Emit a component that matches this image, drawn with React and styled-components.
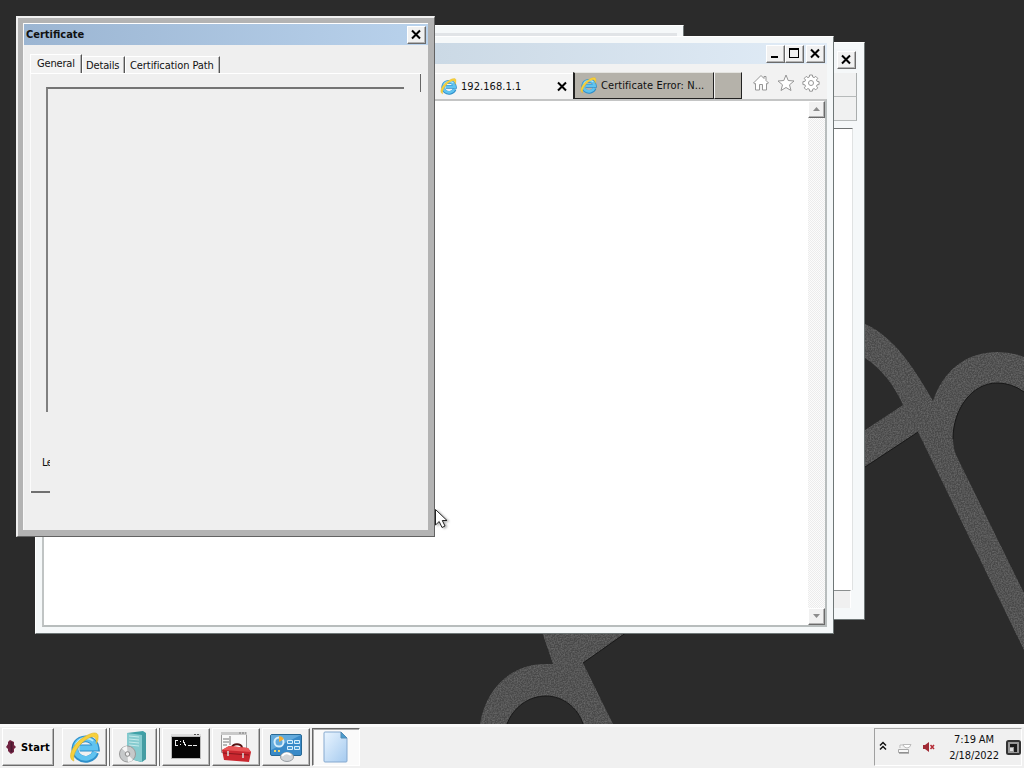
import React from "react";
import styled, { createGlobalStyle, css } from "styled-components";

const GlobalStyle = createGlobalStyle`
  * {
    box-sizing: border-box;
  }
  body {
    margin: 0;
    overflow: hidden;
    font-family: "DejaVu Sans Condensed", "DejaVu Sans", sans-serif;
    font-stretch: condensed;
    font-size: 11px;
    line-height: 14px;
    color: #111;
  }
`;

const raised = css`
  border: 1px solid;
  border-color: #fff #6b6b6b #6b6b6b #fff;
  box-shadow: inset -1px -1px 0 #b4b4b4;
`;

const StyledScreen = styled.div`
  width: 1024px;
  height: 768px;
  display: flex;
  flex-direction: column;
  overflow: hidden;
  position: relative;
`;

const StyledDesktop = styled.main`
  height: 724px;
  position: relative;
  overflow: hidden;
  background: #2b2b2b;
`;

const StyledWallpaper = styled.svg`
  display: block;
`;

const StyledWindow = styled.section`
  position: absolute;
  left: ${props => props.$x}px;
  top: ${props => props.$y}px;
  width: ${props => props.$w}px;
  height: ${props => props.$h}px;
  display: flex;
  flex-direction: column;
  padding: 6px;
  background: #f5f8f9;
  border: 1px solid;
  border-color: #fff #6f7777 #6f7777 #fff;
`;

const StyledDialog = styled(StyledWindow)`
  padding: 5px 6px 6px 5px;
  background: #b3b3b3;
  border-width: 2px 1px 1px 2px;
  border-color: #f0f0f0 #626262 #626262 #f0f0f0;
`;

const StyledDialogInner = styled.div`
  flex: 1;
  display: flex;
  flex-direction: column;
  background: #efefef;
  border-top: 1px solid #fff;
  border-left: 1px solid #f8f8f8;
`;

const StyledTitleBar = styled.header`
  height: 21px;
  flex: none;
  display: flex;
  align-items: center;
  justify-content: space-between;
  padding: 0 2px;
  background: ${props => props.$fill};
`;

const StyledTitle = styled.h1`
  margin: 0;
  padding-top: 1px;
  font-size: 11px;
  font-weight: 700;
  line-height: 14px;
  letter-spacing: 0;
`;

const StyledButtons = styled.div`
  display: flex;
  margin-left: auto;
`;

const StyledWindowButton = styled.button`
  ${raised}
  width: 19px;
  height: 18px;
  padding: 0 2px 2px 0;
  margin-left: ${props => props.$gap || 0}px;
  background: #f1f1f1;
  display: flex;
  align-items: center;
  justify-content: center;
`;

const StyledPlainEdge = styled.div`
  height: 3px;
  margin-top: 1px;
  background: #e1e4e7;
`;

const StyledRearRow = styled.div`
  height: 24px;
  flex: none;
  margin-top: ${props => props.$gap || 0}px;
  margin-right: 1px;
  background: #f0f1f1;
  border-right: 1px solid #a9adad;
  border-bottom: 1px solid #b6baba;
`;

const StyledRearPage = styled.div`
  height: 462px;
  margin: 7px 5px 0 0;
  background: #fff;
  border-top: 1px solid #6e7272;
  border-right: 1px solid #e0e2e2;
`;

const StyledRearStatus = styled.div`
  height: 18px;
  margin: 0 7px 0 0;
  background: #f0f0f0;
  border-top: 1px solid #8b8f8f;
  border-right: 1px solid #fff;
`;

const StyledToolbar = styled.nav`
  height: 35px;
  flex: none;
  display: flex;
  justify-content: flex-end;
  align-items: flex-end;
  background: #f2f2f2;
`;

const StyledBrowserTab = styled.div`
  width: ${props => props.$w}px;
  height: ${props => (props.$active ? 26 : 27)}px;
  display: flex;
  align-items: center;
  gap: 4px;
  padding: ${props => (props.$active ? "0 5px 1px 5px" : "0 6px 0 5px")};
  background: ${props => (props.$active ? "#f3f3f3" : "#b5b2aa")};
  border-style: solid;
  border-width: ${props => (props.$active ? "1px 0 0" : "1px 1px 1px 1px")};
  border-color: ${props => (props.$active ? "#fff" : "#e4e4e0 #222 #222 #f4f4f4")};
  ${props => props.$edge && "border-left: 2px solid #222;"}
`;

const StyledTabLabel = styled.span`
  flex: 1;
  padding-top: 1px;
  white-space: nowrap;
  letter-spacing: ${props => props.$spacing || 0}px;
`;

const StyledTools = styled.div`
  width: 85px;
  height: 31px;
  display: flex;
  gap: 7px;
  padding: 6px 0 0 10px;
`;

const StyledPage = styled.div`
  flex: 1;
  display: flex;
  justify-content: flex-end;
  background: #fff;
  border: 2px solid;
  border-color: #c4c5c5 #b8bdbd #b8bdbd #c0c4c4;
`;

const StyledScrollBar = styled.div`
  width: 17px;
  display: flex;
  flex-direction: column;
  justify-content: space-between;
  background: repeating-conic-gradient(#ececec 0 25%, #fcfcfc 0 50%) 0 0 / 2px 2px;
`;

const StyledScrollButton = styled.div`
  ${raised}
  height: 17px;
  background: #f1f1f1;
  display: flex;
  align-items: center;
  justify-content: center;
`;

const StyledDialogTabs = styled.div`
  display: flex;
  align-items: flex-end;
  height: 28px;
  flex: none;
  padding-left: 6px;
`;

const StyledDialogTab = styled.div`
  width: ${props => props.$w}px;
  height: ${props => (props.$active ? 19 : 17)}px;
  padding: 2px 0 0 ${props => props.$inset}px;
  letter-spacing: ${props => props.$spacing}px;
  white-space: nowrap;
  background: #f2f2f2;
  border: solid;
  border-width: 1px 1px 0 1px;
  border-color: #fff #555 #fff #fff;
  box-shadow: inset -1px 0 0 #b4b4b4;
`;

// only part of the sheet's right and bottom edge has been painted
const StyledSheet = styled.div`
  width: 391px;
  height: 420px;
  margin-left: 6px;
  padding: 13px 0 0 15px;
  border-top: 1px solid #fff;
  border-left: 1px solid #fbfbfb;
  background:
    linear-gradient(#666, #666) right top / 1px 18px no-repeat,
    linear-gradient(#707070, #707070) left bottom / 19px 2px no-repeat,
    #efefef;
`;

const StyledGroup = styled.div`
  width: 358px;
  height: 325px;
  border-top: 2px solid #747474;
  border-left: 2px solid #808080;
`;

const StyledCutLabel = styled.div`
  width: 8px;
  height: 14px;
  margin: 44px 0 0 -4px;
  overflow: hidden;
  letter-spacing: -0.6px;
`;

const StyledCursor = styled.svg`
  position: absolute;
  left: 434px;
  top: 508px;
  filter: drop-shadow(2px 1px 1px rgba(0, 0, 0, 0.3));
`;

const StyledTaskbar = styled.footer`
  height: 44px;
  display: flex;
  align-items: flex-start;
  padding: 1px 2px 0;
  background: #f0f0f0;
  border-top: 3px solid #fafafa;
`;

const StyledStart = styled.button`
  ${raised}
  width: 52px;
  height: 38px;
  margin-right: 8px;
  padding: 0 0 0 2px;
  display: flex;
  align-items: center;
  gap: 4px;
  background: #f1f1f1;
  color: #000;
  font: 700 11px "DejaVu Sans Condensed", "DejaVu Sans", sans-serif;
  font-stretch: condensed;
  letter-spacing: 0.15px;
`;

const StyledTask = styled.div`
  ${raised}
  width: ${props => (props.$stacked ? 45 : 48)}px;
  height: 38px;
  margin-right: ${props => (props.$stacked ? 5 : 2)}px;
  display: flex;
  align-items: center;
  justify-content: center;
  background: #f1f1f1;
  ${props => props.$stacked && "box-shadow: inset -1px -1px 0 #b4b4b4, 2px 0 0 #f8f8f8, 3px 0 0 #707070;"}
  ${props =>
    props.$pressed &&
    "border-color: #666 #fff #fff #666; box-shadow: inset 1px 1px 0 #aaa; background: #fafafa;"}
`;

const StyledTray = styled.div`
  width: 148px;
  height: 38px;
  margin-left: auto;
  display: flex;
  align-items: center;
  padding-left: 4px;
  border: 1px solid;
  border-color: #a8a8a8 #fff #fff #a0a0a0;
`;

const StyledTrayIcon = styled.svg`
  margin-left: ${props => props.$gap || 0}px;
`;

const StyledClock = styled.div`
  width: 60px;
  margin: 1px 2px 0 8px;
  text-align: center;
  line-height: 16px;
  white-space: nowrap;
  letter-spacing: -0.12px;
`;

const Glyph = ({ kind }) => (
  <svg width="12" height="12" viewBox="0 0 12 12" fill="none" stroke="#000" shapeRendering={kind === "close" ? "auto" : "crispEdges"}>
    {kind === "close" && <path d="M2 2.5L10 10.5M10 2.5L2 10.5" strokeWidth="2" />}
    {kind === "max" && <path d="M1.5 1v10M10.5 1v10M1 10.5h10M1 2h10" />}
    {kind === "max" && <path d="M1 1.5h10M1 2.5h10" />}
    {kind === "min" && <path d="M2 10h7" strokeWidth="2" />}
  </svg>
);

const IeLogo = ({ size }) => (
  <svg width={size} height={size} viewBox="0 0 32 32" fill="none">
    <path d="M27.500 21A11 10.500 0 1 1 28 16.500H11" stroke="#2f8fca" strokeWidth="7" />
    <path d="M26.800 20.800A10.500 10 0 1 1 27.500 16.500H11" stroke="#5fc3f0" strokeWidth="5" />
    <path d="M7 14C9 7 18 4 25 9" stroke="#b5e8fa" strokeWidth="2" />
    <path d="M5 30C-3 27 4 12 16 5C24 0 31 -1 30 6C30 9 29 10 28 12C28.500 8 28 5 24 5C17 6 3 19 5 30Z" fill="#f7d03c" stroke="#dfb222" strokeWidth=".6" />
  </svg>
);

const Arrow = ({ down }) => (
  <svg width="9" height="5" viewBox="0 0 9 5">
    <path d={down ? "M1 0h7L4.5 4Z" : "M1 4h7L4.5 0Z"} fill="#8c8c8c" />
  </svg>
);

const Wallpaper = () => (
  <StyledWallpaper width="1024" height="724">
    <defs>
      <filter id="grain" x="0" y="0" width="100%" height="100%">
        <feTurbulence type="fractalNoise" baseFrequency=".7" numOctaves="2" result="n" />
        <feColorMatrix in="n" type="matrix" values="0 0 0 0 .5  0 0 0 0 .5  0 0 0 0 .5  .35 0 0 0 -.12" />
        <feComposite in2="SourceGraphic" operator="in" result="g" />
        <feMerge>
          <feMergeNode in="SourceGraphic" />
          <feMergeNode in="g" />
        </feMerge>
      </filter>
    </defs>
    <g fill="#484848" filter="url(#grain)">
      <path d="M865 324C894 336 916 371 933 401C943 371 966 352 997 352Q1012 352 1024 357V392C1014 385 1006 383 997 383C972 383 953 409 953 439Q953 450 958 459L1024 593V650L918 432L865 467V430L903 405Q889 374 865 358Z" />
      <path d="M542 632H627L583 663L613 724H583C578 708 563 696 546 696C528 696 513 708 507 724H480C486 688 511 664 545 664H553Z" />
    </g>
    <path d="M865 467L918 432M627 632L583 663M507 724C513 708 528 696 546 696C563 696 578 708 583 724M953 439C953 409 972 383 997 383Q1012 383 1024 392" fill="none" stroke="#181818" />
  </StyledWallpaper>
);

const BrowserTools = () => (
  <>
    <svg width="18" height="18" viewBox="0 0 18 18" fill="#fff" stroke="#969696" strokeLinejoin="round">
      <path d="M1.5 9L9 1.5L12 4.5V2.5H14V6.5L16.5 9L15 10L14.5 9.5V16H10.5V10.5H7.5V16H3.5V9.5L3 10Z" />
    </svg>
    <svg width="18" height="18" viewBox="0 0 18 18" fill="#fff" stroke="#969696" strokeLinejoin="round">
      <path d="M9 1L11.2 6.5L17 7L12.5 10.8L14 16.5L9 13.5L4 16.5L5.5 10.8L1 7L6.8 6.5Z" />
    </svg>
    <svg width="18" height="18" viewBox="0 0 18 18" fill="#fff" stroke="#969696" strokeLinejoin="round">
      <path d="M7.6 1h2.8l.3 2 1.4.6 1.7-1.2 1.9 1.9-1.2 1.7.6 1.4 2 .3v2.8l-2 .3-.6 1.4 1.2 1.7-1.9 1.9-1.7-1.2-1.4.6-.3 2H7.6l-.3-2-1.4-.6-1.7 1.2-1.9-1.9 1.2-1.7-.6-1.4-2-.3V7.7l2-.3.6-1.4-1.2-1.7 1.9-1.9 1.7 1.2L7.3 3Z" />
      <circle cx="9" cy="9" r="2.5" />
    </svg>
  </>
);

const ServerIcon = () => (
  <svg width="32" height="32" viewBox="0 0 32 32">
    <path d="M8 2L24 0L27 2V28L22 31L8 27Z" fill="#3fa1a7" />
    <path d="M8 2L23 4V31L8 27Z" fill="#86cbcf" />
    <path d="M10 5l10 1M10 8l10 1M10 11l10 1M10 14l10 1" stroke="#c5eaeb" />
    <path d="M23 4L27 2V28L23 31Z" fill="#459da3" />
    <circle cx="8.5" cy="23" r="8" fill="#c6c9ca" stroke="#999" />
    <path d="M8.5 23L3 17.5A8 8 0 0 1 8 15ZM8.5 23L14 29A8 8 0 0 1 9 31Z" fill="#f5f5f5" />
    <circle cx="8.5" cy="23" r="2.3" fill="#eee" stroke="#888" />
  </svg>
);

const CommandIcon = () => (
  <svg width="32" height="28" viewBox="0 0 32 28" shapeRendering="crispEdges">
    <path d="M1 1h30v25H1Z" fill="#bbb" />
    <path d="M1 1h30v2H1Z" fill="#ddd" />
    <path d="M24 1h2v1h-2zM27 1h2v1h-2z" fill="#555" />
    <path d="M2 4h28v21H2Z" fill="#050505" />
    <path d="M8 7.500H5.500v5H8M10.500 8v1M10.500 11v1M13.500 7v2h1v2h1v2M18 12.500h4M23 12.500h4" fill="none" stroke="#eee" />
  </svg>
);

const ToolboxIcon = () => (
  <svg width="32" height="32" viewBox="0 0 32 32">
    <path d="M1.5 1.5h25v20h-25Z" fill="#fafafa" stroke="#999" />
    <path d="M1 1h26v3H1Z" fill="#c9c9c9" />
    <path d="M19 2h2M22 2h2M25 2h1M3 8h6M3 11h6M3 14h4M10 5v9" stroke="#777" />
    <path d="M12 17C12 12 22 12 22 17" fill="none" stroke="#511" strokeWidth="2" />
    <path d="M2 19L9 15L28 17L31 21L29 31L4 29Z" fill="#ca2830" />
    <path d="M2 19L9 15L28 17L31 21Z" fill="#e95556" />
    <path d="M3 22L29 24" stroke="#8b171d" />
    <path d="M8 20v5M23 22v5" stroke="#ddd" strokeWidth="1.500" />
  </svg>
);

const ControlIcon = () => (
  <svg width="34" height="30" viewBox="0 0 34 30">
    <rect x="1.5" y="2.5" width="31" height="21" rx="1.5" fill="#398ac8" stroke="#286995" />
    <path d="M2 3h30L2 18Z" fill="#63aadc" />
    <circle cx="10" cy="10" r="4.5" fill="none" stroke="#d5edfb" strokeWidth="2" />
    <path d="M10 10V4A6 6 0 0 1 15 7Z" fill="#f4ae35" />
    <path d="M5 19h2M9 19h2" stroke="#f3d468" strokeWidth="2" />
    <path d="M18.500 8.500h5v3h-5zM25.500 8.500h5v3h-5zM18.500 14.500h5v3h-5zM25.500 14.500h5v3h-5z" fill="#4c9ed5" stroke="#d9effc" />
    <ellipse cx="18" cy="25" rx="6.500" ry="4.500" fill="#d2d5d8" stroke="#989da2" />
    <path d="M13 24Q17 19 22 23" fill="none" stroke="#fff" strokeWidth="2" />
  </svg>
);

const DocumentIcon = () => (
  <svg width="26" height="32" viewBox="0 0 26 32">
    <defs>
      <linearGradient id="paper" x2="1" y2="1">
        <stop stopColor="#eaf5ff" />
        <stop offset="1" stopColor="#a5caef" />
      </linearGradient>
    </defs>
    <path d="M1 2Q1 1 2 1H18L24 7V30Q24 31 23 31H2Q1 31 1 30Z" fill="url(#paper)" stroke="#86a9cf" />
    <path d="M18 1V7H24Z" fill="#4a9bcd" stroke="#538bb4" />
  </svg>
);

const Tray = () => (
  <StyledTray>
    <StyledTrayIcon width="8" height="12" viewBox="0 0 8 12" fill="none" stroke="#111" strokeWidth="1.500">
      <path d="M1 4.500L4 1.500L7 4.500M1 8.500L4 5.500L7 8.500" />
    </StyledTrayIcon>
    <StyledTrayIcon $gap={10} width="16" height="14" viewBox="0 0 16 14">
      <path d="M1.500 9.500h10v3h-10Z" fill="#f8f8f8" stroke="#aaa" />
      <path d="M3 8V5h3M6 4.500h8Q13 8 10 8T6 4.500" fill="#fff" stroke="#bbb" />
      <path d="M2 13h10" stroke="#777" />
    </StyledTrayIcon>
    <StyledTrayIcon $gap={9} width="14" height="12" viewBox="0 0 14 12">
      <path d="M1 4H3L7 1V11L3 8H1Z" fill="#a12b35" />
      <path d="M8.500 4L12 8M12 4L8.500 8" stroke="#b42b36" strokeWidth="1.500" />
    </StyledTrayIcon>
    <StyledClock>
      7:19 AM
      <br />
      2/18/2022
    </StyledClock>
    <StyledTrayIcon width="15" height="15" viewBox="0 0 15 15">
      <rect x="1" y="1" width="13" height="13" rx="1.500" fill="#999" stroke="#333" strokeWidth="2" />
      <path d="M4 4h7v8H8V7H4Z" fill="#1c1c1c" />
      <path d="M4 8h3v3H4Z" fill="#ddd" />
    </StyledTrayIcon>
  </StyledTray>
);

const App = () => (
  <StyledScreen>
    <GlobalStyle />
    <StyledDesktop>
      <Wallpaper />
      <StyledWindow $x={100} $y={25} $w={584} $h={500}>
        <StyledPlainEdge />
      </StyledWindow>
      <StyledWindow $x={300} $y={42} $w={565} $h={578}>
        <StyledTitleBar $fill="#f3f6f8">
          <StyledButtons>
            <StyledWindowButton aria-label="Close"><Glyph kind="close" /></StyledWindowButton>
          </StyledButtons>
        </StyledTitleBar>
        <StyledRearRow $gap={3} />
        <StyledRearRow />
        <StyledRearPage />
        <StyledRearStatus />
      </StyledWindow>
      <StyledWindow $x={35} $y={36} $w={799} $h={598}>
        <StyledTitleBar $fill="linear-gradient(90deg, #cbd9e5 50%, #e1ecf7)">
          <StyledButtons>
            <StyledWindowButton aria-label="Minimize"><Glyph kind="min" /></StyledWindowButton>
            <StyledWindowButton aria-label="Maximize"><Glyph kind="max" /></StyledWindowButton>
            <StyledWindowButton aria-label="Close" $gap={2}><Glyph kind="close" /></StyledWindowButton>
          </StyledButtons>
        </StyledTitleBar>
        <StyledToolbar>
          <StyledBrowserTab $w={138} $active>
            <IeLogo size={17} />
            <StyledTabLabel $spacing={0.05}>192.168.1.1</StyledTabLabel>
            <Glyph kind="close" />
          </StyledBrowserTab>
          <StyledBrowserTab $w={141} $edge>
            <IeLogo size={17} />
            <StyledTabLabel $spacing={0.07}>Certificate Error: N...</StyledTabLabel>
          </StyledBrowserTab>
          <StyledBrowserTab $w={28} />
          <StyledTools>
            <BrowserTools />
          </StyledTools>
        </StyledToolbar>
        <StyledPage>
          <StyledScrollBar>
            <StyledScrollButton><Arrow /></StyledScrollButton>
            <StyledScrollButton><Arrow down /></StyledScrollButton>
          </StyledScrollBar>
        </StyledPage>
      </StyledWindow>
      <StyledDialog $x={16} $y={16} $w={419} $h={521}>
        <StyledDialogInner>
          <StyledTitleBar $fill="linear-gradient(90deg, #9bb5d2, #b9d2ec)">
            <StyledTitle>Certificate</StyledTitle>
            <StyledWindowButton aria-label="Close"><Glyph kind="close" /></StyledWindowButton>
          </StyledTitleBar>
          <StyledDialogTabs>
            <StyledDialogTab $w={52} $active $inset={6} $spacing={-0.18}>General</StyledDialogTab>
            <StyledDialogTab $w={43} $inset={3} $spacing={-0.15}>Details</StyledDialogTab>
            <StyledDialogTab $w={95} $inset={4} $spacing={-0.08}>Certification Path</StyledDialogTab>
          </StyledDialogTabs>
          <StyledSheet>
            <StyledGroup />
            <StyledCutLabel>Le</StyledCutLabel>
          </StyledSheet>
        </StyledDialogInner>
      </StyledDialog>
      <StyledCursor width="16" height="22" viewBox="0 0 16 22">
        <path d="M1.500 1.500V17L5.200 13.500L8 19.500L11 18L8.300 12.500H13Z" fill="#fff" stroke="#222" />
      </StyledCursor>
    </StyledDesktop>
    <StyledTaskbar>
      <StyledStart>
        <svg width="12" height="16" viewBox="0 0 12 16">
          <path d="M5 1L9 3V6L11 8L9 10V13L6 15L3 12V10L1 8L3 5V3Z" fill="#702341" />
          <path d="M6.500 3v10" stroke="#4a1830" strokeWidth="2" />
        </svg>
        Start
      </StyledStart>
      <StyledTask $stacked><IeLogo size={31} /></StyledTask>
      <StyledTask $stacked><ServerIcon /></StyledTask>
      <StyledTask><CommandIcon /></StyledTask>
      <StyledTask><ToolboxIcon /></StyledTask>
      <StyledTask><ControlIcon /></StyledTask>
      <StyledTask $pressed><DocumentIcon /></StyledTask>
      <Tray />
    </StyledTaskbar>
  </StyledScreen>
);

export default App;
